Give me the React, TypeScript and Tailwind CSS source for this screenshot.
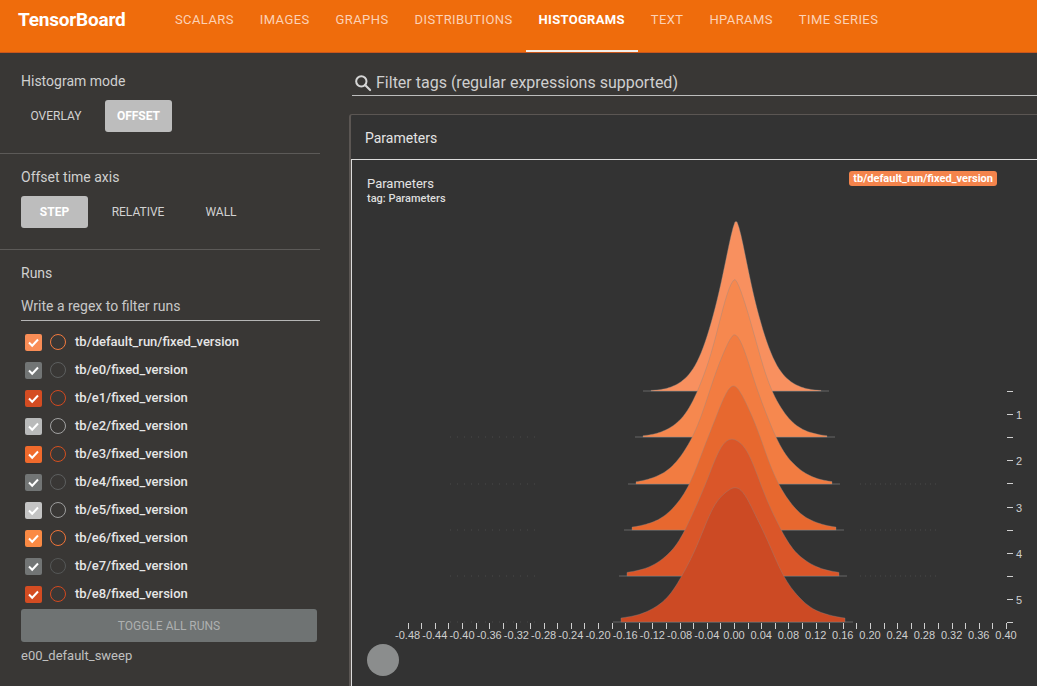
import React from "react";

const tabs = ["SCALARS", "IMAGES", "GRAPHS", "DISTRIBUTIONS", "HISTOGRAMS", "TEXT", "HPARAMS", "TIME SERIES"];

const runs = [
  { name: "tb/default_run/fixed_version", box: "bg-[#f98d56]", ring: "border-[#f27a3e]" },
  { name: "tb/e0/fixed_version", box: "bg-[#727575]", ring: "border-[#5d5f5f]" },
  { name: "tb/e1/fixed_version", box: "bg-[#d44c22]", ring: "border-[#d2491f]" },
  { name: "tb/e2/fixed_version", box: "bg-[#b9baba]", ring: "border-[#a2a2a2]" },
  { name: "tb/e3/fixed_version", box: "bg-[#f06a2c]", ring: "border-[#d4501f]" },
  { name: "tb/e4/fixed_version", box: "bg-[#727575]", ring: "border-[#5d5f5f]" },
  { name: "tb/e5/fixed_version", box: "bg-[#c4c4c4]", ring: "border-[#9d9d9d]" },
  { name: "tb/e6/fixed_version", box: "bg-[#fa8a44]", ring: "border-[#f07438]" },
  { name: "tb/e7/fixed_version", box: "bg-[#727575]", ring: "border-[#555757]" },
  { name: "tb/e8/fixed_version", box: "bg-[#d44c22]", ring: "border-[#d2491f]" },
];

// offset-mode ridges, back to front
const layers = [
  { base: 391, h: 169, s: 15, p: 1.45, c: 736, w: 85, color: "#f8905f" },
  { base: 437, h: 158, s: 19, p: 1.55, c: 735, w: 92, color: "#f6884f" },
  { base: 484, h: 149, s: 23, p: 1.65, c: 734, w: 98, color: "#f27c41" },
  { base: 530, h: 143, s: 26, p: 1.8, c: 734, w: 102, color: "#e7682f" },
  { base: 576, h: 138, s: 29, p: 1.9, c: 733, w: 106, color: "#da5629" },
  { base: 622, h: 134, s: 32, p: 2.0, c: 733, w: 112, color: "#cc4a24" },
];

function ridge(l: (typeof layers)[number]) {
  const pts: string[] = [];
  for (let dx = -l.w; dx <= l.w; dx += 2) {
    const a = Math.abs(dx / l.s);
    const g = 0.85 * Math.exp(-0.5 * Math.pow(a, l.p)) + 0.15 * Math.exp(-0.5 * Math.pow(dx / (l.s * 1.9), 2));
    const wob = 1 + 0.01 * Math.sin(dx * 0.21 + l.base);
    pts.push(`${l.c + dx},${(l.base - l.h * g * wob).toFixed(1)}`);
  }
  return `M${l.c - l.w},${l.base} L${pts.join(" L")} L${l.c + l.w},${l.base} Z`;
}

const x0 = 734;
const ppu = 680;

function Check() {
  return (
    <svg width="17" height="17" viewBox="0 0 17 17">
      <path d="M4 8.5 L7.2 11.7 L13 5.5" fill="none" stroke="white" strokeWidth="2" />
    </svg>
  );
}

function Chart() {
  const ticks: number[] = [];
  for (let i = -24; i <= 20; i++) ticks.push(i * 0.02);
  const labels: number[] = [];
  for (let i = -12; i <= 10; i++) labels.push(i * 0.04);
  const yt: number[] = [];
  for (let k = 0; k <= 10; k++) yt.push(k);

  return (
    <svg width="685" height="432" viewBox="352 210 685 432" className="block">
      {layers.map((l, i) => (
        <g key={i}>
          <line x1={l.c - l.w - 8} y1={l.base} x2={l.c + l.w + 8} y2={l.base} stroke="#666" strokeWidth="1" />
          {i >= 1 && (
            <line x1="450" y1={l.base} x2="540" y2={l.base} stroke="#4a4a4a" strokeWidth="1" strokeDasharray="1 6" />
          )}
          {i >= 2 && i <= 4 && (
            <line x1="860" y1={l.base} x2="940" y2={l.base} stroke="#4a4a4a" strokeWidth="1" strokeDasharray="1 4" />
          )}
          <path d={ridge(l)} fill={l.color} stroke="#8a8a8a" strokeOpacity="0.5" strokeWidth="0.7" />
        </g>
      ))}
      {ticks.map((t, i) => {
        const x = Math.round(x0 + t * ppu) + 0.5;
        return <line key={i} x1={x} y1="623" x2={x} y2="629" stroke="#cfcfcf" strokeWidth="1" />;
      })}
      {labels.map((t, i) => (
        <text
          key={i}
          x={x0 + t * ppu}
          y="639"
          fontSize="11"
          fill="#cfcfcf"
          textAnchor="middle"
          fontFamily="'Liberation Sans', Arial, sans-serif"
        >
          {Math.abs(t) < 1e-9 ? "0.00" : t.toFixed(2)}
        </text>
      ))}
      {yt.map((k) => {
        const y = Math.round(391 + k * 23.1) + 0.5;
        return (
          <g key={k}>
            <line x1="1007" y1={y} x2="1013" y2={y} stroke="#cfcfcf" strokeWidth="1" />
            {k % 2 === 1 && (
              <text x="1016" y={y + 4} fontSize="11" fill="#cfcfcf" fontFamily="'Liberation Sans', Arial, sans-serif">
                {(k + 1) / 2}
              </text>
            )}
          </g>
        );
      })}
    </svg>
  );
}

export default function App() {
  return (
    <div className="h-screen w-screen overflow-hidden flex flex-col bg-[#393735] font-['Roboto',sans-serif]">
      {/* toolbar */}
      <div className="h-[53px] shrink-0 flex bg-[#ef6c0c] border-b border-[#c9561c]">
        <div className="w-[162px] pl-[18px] pt-[9px] text-white font-bold text-[19px] leading-[22px] tracking-[-0.2px]">
          TensorBoard
        </div>
        <div className="flex">
          {tabs.map((t) =>
            t === "HISTOGRAMS" ? (
              <div
                key={t}
                className="px-[13px] pt-[10px] text-[13px] leading-5 font-bold tracking-[0.3px] text-white border-b-2 border-[#f5efe8]"
              >
                {t}
              </div>
            ) : (
              <div key={t} className="px-[13px] pt-[10px] text-[13px] leading-5 font-normal tracking-[0.4px] text-[#fcd2b6]">
                {t}
              </div>
            )
          )}
        </div>
      </div>

      <div className="flex flex-1 min-h-0">
        {/* sidebar */}
        <div className="w-[336px] shrink-0 flex flex-col">
          <div className="mr-4 pl-[21px] pt-[18px] pb-[21px] border-b border-[#5c5a58]">
            <div className="text-[14px] leading-5 text-[#d0d0d0]">Histogram mode</div>
            <div className="flex gap-[14px] mt-[9px]">
              <div className="w-[70px] h-8 flex items-center justify-center text-[12px] text-[#d2d2d2]">OVERLAY</div>
              <div className="w-[67px] h-8 flex items-center justify-center rounded-[3px] bg-[#bdbdbd] text-[12px] font-bold text-white">
                OFFSET
              </div>
            </div>
          </div>
          <div className="mr-4 pl-[21px] pt-[13px] pb-[21px] border-b border-[#5c5a58]">
            <div className="text-[14px] leading-5 text-[#d0d0d0]">Offset time axis</div>
            <div className="flex gap-[6px] mt-[9px]">
              <div className="w-[67px] h-8 flex items-center justify-center rounded-[3px] bg-[#bdbdbd] text-[12px] font-bold text-white">
                STEP
              </div>
              <div className="w-[88px] h-8 flex items-center justify-center text-[12px] text-[#d2d2d2]">RELATIVE</div>
              <div className="w-[64px] h-8 ml-[1px] flex items-center justify-center text-[12px] text-[#d2d2d2]">WALL</div>
            </div>
          </div>
          <div className="pl-[21px] pr-4 pt-[13px]">
            <div className="text-[14px] leading-5 text-[#d0d0d0]">Runs</div>
            <div className="mt-[13px] pb-1 border-b border-[#b5b5b5] text-[14px] leading-5 text-[#c8c8c8]">
              Write a regex to filter runs
            </div>
            <div className="mt-[7px]">
              {runs.map((r) => (
                <div key={r.name} className="h-[28px] flex items-center pl-1">
                  <div className={`w-[17px] h-[17px] rounded-[2px] ${r.box}`}>
                    <Check />
                  </div>
                  <div className={`ml-[8px] w-4 h-4 rounded-full border-[1.5px] ${r.ring}`} />
                  <div className="ml-[9px] text-[13px] font-medium text-[#e6e6e6]">{r.name}</div>
                </div>
              ))}
            </div>
            <div className="mt-px w-[296px] h-[33px] rounded-[3px] bg-[#6f7373] flex items-center justify-center text-[12px] text-[#aeb0b0]">
              TOGGLE ALL RUNS
            </div>
            <div className="mt-[5px] text-[13px] leading-[18px] text-[#c0c0c0]">e00_default_sweep</div>
          </div>
        </div>

        {/* main */}
        <div className="flex-1 min-w-0 flex flex-col pl-[13px] pt-[17px]">
          <div className="ml-[3px] h-[26px] flex items-center border-b border-[#bdbdbd]">
            <svg width="20" height="20" viewBox="0 0 24 24" className="ml-px">
              <circle cx="10" cy="10" r="6.2" fill="none" stroke="#d6d6d6" strokeWidth="2.4" />
              <path d="M14.5 14.5 L20.5 20.5" stroke="#d6d6d6" strokeWidth="2.6" strokeLinecap="round" />
            </svg>
            <span className="ml-[3px] text-[16px] text-[#cfcfcf]">Filter tags (regular expressions supported)</span>
          </div>

          <div className="mt-[18px] flex-1 flex flex-col border border-r-0 border-b-0 border-l-2 border-[#5b5653] rounded-tl-[3px] bg-[#333333]">
            <div className="h-[44px] flex items-center pl-[14px] pt-[2px] text-[14px] text-[#e4e4e4]">Parameters</div>
            <div className="flex-1 flex flex-col border-t border-l border-[#dcdcdc] bg-[#333333]">
              <div className="h-[50px] flex">
                <div className="pl-[15px] pt-[16px]">
                  <div className="text-[13px] leading-4 text-[#e4e4e4]">Parameters</div>
                  <div className="text-[11px] leading-[14px] font-medium text-[#dedede]">tag: Parameters</div>
                </div>
                <div className="ml-auto mr-[40px] mt-[11px] h-[15px] px-[4px] rounded-[3px] bg-[#f4844c] text-[11px] leading-[15px] font-bold text-white">
                  tb/default_run/fixed_version
                </div>
              </div>
              <Chart />
              <div className="ml-[15px] mt-[2px] w-8 h-8 rounded-full bg-[#8b8d8d]" />
            </div>
          </div>
        </div>
      </div>
    </div>
  );
}
